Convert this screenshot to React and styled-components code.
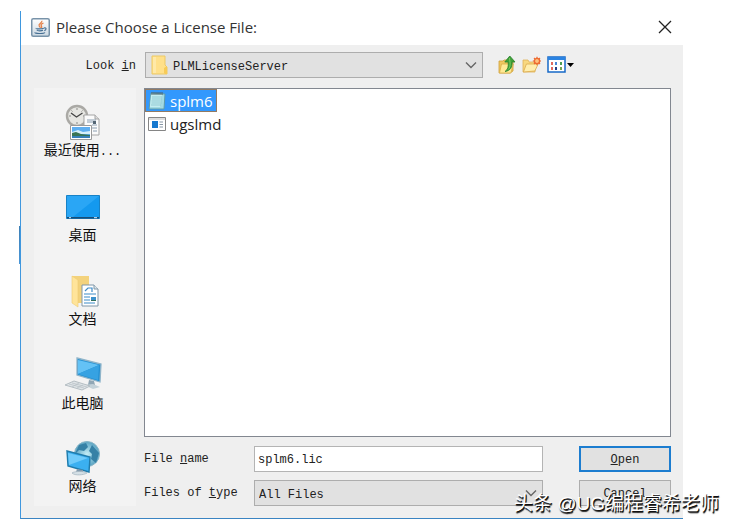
import React, { useState } from "react";
import styled, { createGlobalStyle } from "styled-components";

const GlobalStyle = createGlobalStyle`
  * { box-sizing: border-box; }
  body { margin: 0; background: #fff; color: #222; }
`;

const mono = `"Liberation Mono", "Noto Sans CJK SC", monospace`;
const sans = `"Open Sans", "Noto Sans CJK SC", sans-serif`;

const Page = styled.main`
  position: relative;
  display: flex;
  min-height: 100vh;
  padding: 11px 50px 10px 20px;
  background: linear-gradient(#3d7fb5, #4a97d8) 19px 226px / 1px 38px no-repeat;
`;

const Dialog = styled.section`
  flex: 1;
  display: flex;
  flex-direction: column;
  border-left: 1px solid #3f97de;
  border-bottom: 1px solid #3a84c2;
  font: 12px/16px ${mono};
`;

const TitleBar = styled.header`
  display: flex;
  align-items: center;
  gap: 6px;
  height: 34px;
  padding: 0 11px 2px 10px;
  background: #fff;
`;

const Title = styled.h1`
  flex: 1;
  margin: 0;
  font: 15px/20px ${sans};
  color: #333;
`;

const IconButton = styled.button`
  display: flex;
  padding: 0;
  border: 0;
  background: none;
`;

const Body = styled.form`
  flex: 1;
  display: grid;
  grid-template-columns: 102px 1fr;
  grid-template-rows: 26px 1fr;
  gap: 10px 8px;
  padding: 7px 12px 12px 13px;
  background: #efefef;
`;

const Label = styled.label`
  align-self: center;
  padding-top: ${(p) => (p.$end ? 2 : 0)}px;
  text-align: ${(p) => (p.$end ? "right" : "left")};
  white-space: nowrap;
`;

const LookRow = styled.div`
  display: flex;
  align-items: center;
  gap: 8px;
  padding-left: 1px;
`;

const SelectFrame = styled.div`
  flex: 1;
  display: grid;
  align-items: center;
  height: 26px;
  > * { grid-area: 1 / 1; }
  > svg { pointer-events: none; z-index: 1; }
  > svg:first-child { margin-left: 6px; }
  > svg:last-child { justify-self: end; margin-right: 6px; }
`;

const Select = styled.select`
  appearance: none;
  width: 100%;
  height: 26px;
  padding: 3px 24px 0 ${(p) => (p.$icon ? 27 : 4)}px;
  border: 1px solid #adadad;
  border-radius: 0;
  background: #e1e1e1;
  color: #222;
  font: inherit;
`;

const Tools = styled.div`
  display: flex;
  align-items: center;
  gap: 6px;
  width: 180px;
  padding-left: 7px;
`;

const Places = styled.nav`
  display: grid;
  grid-auto-rows: 1fr;
  background: #f3f3f3;
`;

const Place = styled.button`
  display: flex;
  flex-direction: column;
  align-items: center;
  justify-content: center;
  padding: 6px 5px 0 0;
  border: 0;
  background: none;
  color: #111;
  font: 14px/18px "Noto Sans CJK SC", sans-serif;
  white-space: nowrap;
`;

const Dots = styled.span`
  font: 12px/18px ${mono};
`;

const Main = styled.div`
  display: flex;
  flex-direction: column;
  gap: 9px;
`;

const FileList = styled.ul`
  flex: 1;
  margin: 0;
  padding: 0;
  list-style: none;
  border: 1px solid #828790;
  background: #fff;
`;

const FileItem = styled.li`
  display: flex;
`;

const FileButton = styled.button`
  display: flex;
  align-items: center;
  gap: 4px;
  height: 23px;
  padding: 0 3px 0 2px;
  border: 1px solid ${(p) => (p.$selected ? "#927a62" : "transparent")};
  background: ${(p) => (p.$selected ? "#3298fd" : "transparent")};
  color: ${(p) => (p.$selected ? "#fff" : "#222")};
  font: 15px/20px ${sans};
`;

const Fields = styled.div`
  display: grid;
  grid-template-columns: 102px 1fr 92px;
  gap: 8px;
  align-items: center;
`;

const Field = styled.div`
  display: flex;
  padding: 0 28px 0 0;
`;

const TextInput = styled.input`
  width: 100%;
  height: 26px;
  padding: 2px 3px 0;
  border: 1px solid #b4b4b4;
  background: #fff;
  color: #222;
  font: inherit;
  outline: none;
`;

const ActionButton = styled.button`
  height: 26px;
  padding: 2px 0 0;
  border: ${(p) => (p.$primary ? "2px solid #1c7dd0" : "1px solid #adadad")};
  background: #e1e1e1;
  color: #222;
  font: inherit;
`;

const Watermark = styled.div`
  position: absolute;
  right: 14px;
  bottom: 12px;
  pointer-events: none;
  color: #fff;
  font: 19px/26px "Liberation Sans", "Noto Sans CJK SC", sans-serif;
  text-shadow: 1px 1px 0 #111, 1px 2px 1px #222;
  white-space: nowrap;
`;

const JavaIcon = () => (
  <svg width="19" height="19" viewBox="0 0 19 19" fill="none" aria-hidden="true">
    <defs><linearGradient id="jv" x2="0" y2="1"><stop stopColor="#fff" /><stop offset="1" stopColor="#cbd8e2" /></linearGradient></defs>
    <rect x=".75" y=".75" width="17.5" height="17.5" rx="1.5" fill="url(#jv)" stroke="#7893a9" strokeWidth="1.5" />
    <path d="M10.8 2.7c1 2.2-4 3.2-2.6 5.3.5.8 1 1 1.1 1.7M12.5 5c-2.4 1-3 1.8-2 3 .7 1 .2 1.4-.5 2" stroke="#e5824a" strokeWidth="1.3" />
    <path d="M5.3 10.2c-1.4.9 5.8 1 7.5 0M5.8 12.2c1 .9 4.8.8 6.2.1M4.2 14.3c-1.6 1.4 8.6 1.8 9.8.2M13 10c2.8-.7 2.6 2 .3 2.6" stroke="#466f93" strokeWidth="1.1" />
  </svg>
);
const CloseIcon = () => (
  <svg width="14" height="14" viewBox="0 0 14 14" aria-hidden="true"><path d="m1 1 12 12M13 1 1 13" stroke="#222" strokeWidth="1.3" /></svg>
);
const Chevron = () => (
  <svg width="12" height="8" viewBox="0 0 12 8" fill="none" aria-hidden="true"><path d="m1 1.5 5 5 5-5" stroke="#666" strokeWidth="1.4" /></svg>
);
const FolderIcon = () => (
  <svg width="17" height="20" viewBox="0 0 17 20" aria-hidden="true">
    <path d="M1 1h13v9l2 2v7H1z" fill="#ffe08a" stroke="#edc965" /><path d="M13 18v-5l3-2v8h-2z" fill="#f7cb57" /><path d="M2 2h3v16H2z" fill="#ffe9a8" />
  </svg>
);
const UpIcon = () => (
  <svg width="18" height="20" viewBox="0 0 18 20" aria-hidden="true">
    <path d="M1 6h4l1-1h9v11l-3 2H1z" fill="#efc860" stroke="#cfa03a" strokeWidth=".8" />
    <path d="m1.500 18 2-9h11.800l-2.400 9z" fill="#ffe995" stroke="#d9ad48" strokeWidth=".8" />
    <path d="M7 16.500c3-2 3.600-5 3.200-9.500H6.800l5-6L17 7h-3c.6 5.200-1.800 8.800-7 9.500z" fill="#3fa139" stroke="#27802b" strokeWidth=".8" />
    <path d="m11.500 3 .6 5c.1 3-.4 5-2 6.500" stroke="#7bca62" fill="none" />
  </svg>
);
const NewFolderIcon = () => (
  <svg width="19" height="18" viewBox="0 0 19 18" aria-hidden="true">
    <path d="M1 4h5l1 2h6v10H1z" fill="#f8d880" stroke="#dfb258" strokeWidth=".8" />
    <path d="m1.400 16 3-8h11.800l-3.400 7z" fill="#ffeeae" stroke="#dbaa4c" strokeWidth=".8" />
    <circle cx="15" cy="5" r="2.600" fill="#ffc17c" stroke="#ed6b32" strokeWidth="1.300" />
    <path d="M15 .8v2M15 7.200v2M10.800 5h2M17.200 5h1.800M12 2l1.300 1.300M18 2l-1.300 1.300M12 8l1.300-1.300M18 8l-1.300-1.300" stroke="#ed6b32" strokeWidth="1.200" />
  </svg>
);
const ViewIcon = () => (
  <svg width="27" height="18" viewBox="0 0 27 18" aria-hidden="true">
    <path d="M1 1h17v15H1z" fill="#fff" stroke="#1769c8" strokeWidth="1.500" /><path d="M1 1h17v3H1z" fill="#2b83e2" />
    <path d="M4 6h2v3H4z" fill="#e06a5f" /><path d="M8 6h2v3H8z" fill="#4b86d4" /><path d="M13 6h2v3h-2z" fill="#4d9c53" /><path d="M4 11h2v3H4z" fill="#e06a5f" /><path d="M13 11h2v3h-2z" fill="#75a554" /><path d="M8 11h2v3H8z" fill="#263c83" />
    <path d="M20 7h7l-3.500 4z" fill="#000" />
  </svg>
);
const NotepadIcon = () => (
  <svg width="18" height="19" viewBox="0 0 18 19" aria-hidden="true">
    <path d="m3 2 14 1-1 15H1z" fill="#a2dae2" stroke="#5d9aaa" /><path d="m3 3 11 .5L12 16H2z" fill="#c4edf0" />
    <path d="M4 6h10M4 8h10M3.500 10h10M3.500 12h10M3 14h10" stroke="#80bbc7" strokeWidth=".7" /><path d="M4 1v3M6 1v3M8 1v3M10 1v3M12 1v3M14 1v3" stroke="#4c5f68" />
  </svg>
);
const AppIcon = () => (
  <svg width="18" height="14" viewBox="0 0 18 14" aria-hidden="true">
    <path d="M.5.5h17v13H.5z" fill="#fff" stroke="#858585" /><path d="M1 1h16v2H1z" fill="#ddd" /><path d="M4 4h6v7H4z" fill="#1879cf" /><path d="M11.500 5H15M11.500 7.500H15M11.500 10H15" stroke="#8796a5" />
  </svg>
);
const RecentIcon = () => (
  <svg width="36" height="36" viewBox="0 0 36 36" aria-hidden="true">
    <circle cx="12" cy="12" r="10" fill="#e6e6e2" stroke="#aaa9a5" strokeWidth="2.400" />
    <path d="M12 4v2M12 18v2M4 12h2M18 12h2M6.500 6.500l1 1M17.500 6.500l-1 1" stroke="#8d8d89" />
    <path d="m6 9 5.500 4 6-4" fill="none" stroke="#444" strokeWidth="1.300" />
    <path d="M19 11h11l4 4v16H19z" fill="#fbfbfb" stroke="#a5a5a5" /><path d="M30 11v4h4" fill="#ddd" stroke="#a5a5a5" /><path d="M22 16h9M22 18h9M27 21h5M27 24h5M28 27h4" stroke="#8b9eb1" /><path d="M28 17h3v3h-3z" fill="#546674" />
    <path d="M5.500 21.500h21v14h-21z" fill="#fff" stroke="#9a9a9a" /><path d="M7 23h18v11H7z" fill="#5eaef0" /><path d="m7 28 6-2 5 2 7-1v3H7z" fill="#d6effa" /><path d="m7 29 4-1 5 2 9 1v1H7z" fill="#397455" /><path d="M7 32h18v2H7z" fill="#377fb8" />
  </svg>
);
const DesktopIcon = () => (
  <svg width="34" height="36" viewBox="0 0 34 36" aria-hidden="true">
    <path d="M.5 6.500h33v23H.5z" fill="#1499ef" stroke="#1782c7" /><path d="M1 7h32L7 28H1z" fill="#36adf7" opacity=".65" /><path d="M1 28h32v1.500H1z" fill="#174d78" /><path d="M3 28.700h2M28 28.700h3" stroke="#d7ecfa" />
  </svg>
);
const DocumentsIcon = () => (
  <svg width="34" height="36" viewBox="0 0 34 36" aria-hidden="true">
    <path d="M6 3h17v27H9l-3-2z" fill="#f3d27c" /><path d="m6 3 6 4v27l-6-4z" fill="#ffe49a" stroke="#efcb70" strokeWidth=".6" />
    <path d="M16 12h12l4 4v17H16z" fill="#fff" stroke="#8097a8" /><path d="M28 12v4h4" fill="#dbe5e9" stroke="#8097a8" /><path d="m19 18 3-3h4v4M18 21h12M18 24h6M18 27h6M18 30h11" fill="none" stroke="#3d8bc8" strokeWidth="1.200" /><path d="M25 24h5v4h-5z" fill="#3b91cc" /><path d="M25 27h5v1h-5z" fill="#32705a" />
  </svg>
);
const ComputerIcon = () => (
  <svg width="38" height="36" viewBox="0 0 38 36" aria-hidden="true">
    <path d="m13 1 24 6-1 18-23-7z" fill="#2591d3" stroke="#8fb4c9" strokeWidth="1.300" /><path d="m14 3 21 5-21 9z" fill="#64c2f5" /><path d="m14 17 21-9-1 15z" fill="#36a2e2" /><path d="m25 23-1 5h7l-1-4z" fill="#91a7b5" /><path d="m20 28 9-1 7 3-7 2z" fill="#c3d1d8" /><path d="m1 28 9-4 16 5-8 4z" fill="#dfe4e7" stroke="#b5bec3" /><path d="m5 27 15 4M8 26l15 4M8 30l7-4M13 31l6-3" stroke="#b9c2c7" strokeWidth=".8" />
  </svg>
);
const NetworkIcon = () => (
  <svg width="36" height="36" viewBox="0 0 36 36" aria-hidden="true">
    <defs><radialGradient id="globe"><stop stopColor="#c3edf6" /><stop offset="1" stopColor="#5aa3c2" /></radialGradient></defs>
    <circle cx="22" cy="14" r="12.500" fill="url(#globe)" stroke="#86b4c6" /><path d="m14 5 7-2 2 4-4 4-5-1-4 4zM27 5l7 8-3 10-5-4 1-5-3-3z" fill="#3681a6" />
    <path d="m2 11 23 6-1 15-21-6z" fill="#3bb0f1" stroke="#207cac" strokeWidth="1.400" /><path d="m3 13 20 5-19 7z" fill="#70cbfa" /><path d="m12 29-1 3h7v-2z" fill="#829bae" /><path d="M7 33c2-2 13-2 15 0-3 2-12 3-15 0z" fill="#d5e0e6" stroke="#a0b2bd" strokeWidth=".7" />
  </svg>
);

const places = [
  { name: "最近使用", more: true, Icon: RecentIcon },
  { name: "桌面", Icon: DesktopIcon },
  { name: "文档", Icon: DocumentsIcon },
  { name: "此电脑", Icon: ComputerIcon },
  { name: "网络", Icon: NetworkIcon },
];
const files = [
  { name: "splm6", Icon: NotepadIcon },
  { name: "ugslmd", Icon: AppIcon },
];

export default function App() {
  const [selected, setSelected] = useState("splm6");
  const [fileName, setFileName] = useState("splm6.lic");
  return (
    <Page>
      <GlobalStyle />
      <Dialog role="dialog" aria-labelledby="dialog-title">
        <TitleBar>
          <JavaIcon />
          <Title id="dialog-title">Please Choose a License File:</Title>
          <IconButton type="button" aria-label="Close"><CloseIcon /></IconButton>
        </TitleBar>
        <Body onSubmit={(e) => e.preventDefault()}>
          <Label htmlFor="folder" $end>Look <u>i</u>n</Label>
          <LookRow>
            <SelectFrame>
              <FolderIcon />
              <Select id="folder" $icon><option>PLMLicenseServer</option></Select>
              <Chevron />
            </SelectFrame>
            <Tools>
              <IconButton type="button" aria-label="Up one level"><UpIcon /></IconButton>
              <IconButton type="button" aria-label="New folder"><NewFolderIcon /></IconButton>
              <IconButton type="button" aria-label="View menu"><ViewIcon /></IconButton>
            </Tools>
          </LookRow>
          <Places aria-label="Places">
            {places.map(({ name, more, Icon }) => (
              <Place type="button" key={name}>
                <Icon />
                <span>{name}{more && <Dots>...</Dots>}</span>
              </Place>
            ))}
          </Places>
          <Main>
            <FileList>
              {files.map(({ name, Icon }) => (
                <FileItem key={name}>
                  <FileButton type="button" $selected={name === selected} onClick={() => setSelected(name)}>
                    <Icon />{name}
                  </FileButton>
                </FileItem>
              ))}
            </FileList>
            <Fields>
              <Label htmlFor="file-name">File <u>n</u>ame</Label>
              <Field><TextInput id="file-name" value={fileName} onChange={(e) => setFileName(e.target.value)} /></Field>
              <ActionButton type="submit" $primary><u>O</u>pen</ActionButton>
              <Label htmlFor="file-type">Files of <u>t</u>ype</Label>
              <Field>
                <SelectFrame>
                  <Select id="file-type"><option>All Files</option></Select>
                  <Chevron />
                </SelectFrame>
              </Field>
              <ActionButton type="button">Cancel</ActionButton>
            </Fields>
          </Main>
        </Body>
      </Dialog>
      <Watermark>头条 @UG编程睿希老师</Watermark>
    </Page>
  );
}
